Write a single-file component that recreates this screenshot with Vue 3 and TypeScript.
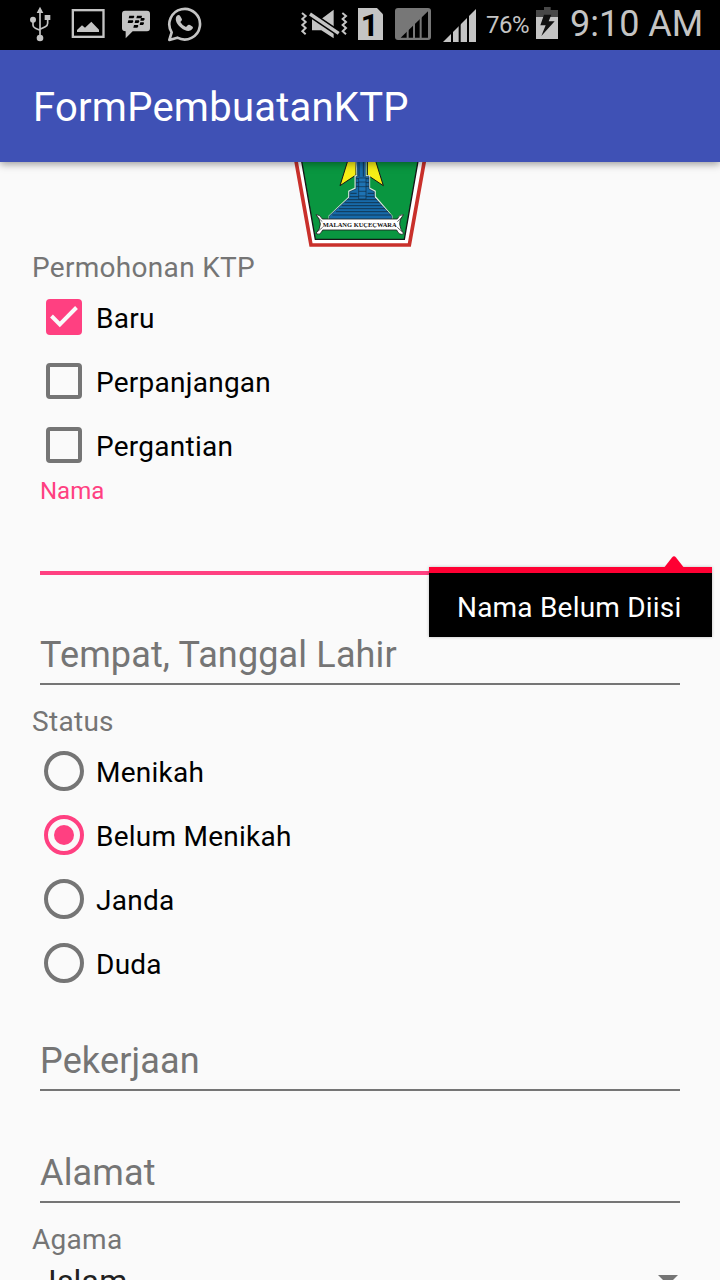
<script setup lang="ts">
import { ref } from 'vue'

const requests: string[] = ['Baru', 'Perpanjangan', 'Pergantian']
const statuses: string[] = ['Menikah', 'Belum Menikah', 'Janda', 'Duda']
const request = ref('Baru')
const status = ref('Belum Menikah')
</script>

<template>
  <div class="screen">
    <header class="statusbar">
      <svg class="usb" viewBox="87 0 66 150" width="22" height="50">
        <g fill="none" stroke="#c4c4c4" stroke-width="5">
          <path d="M120 34V108M99 62V76Q99 82 106 85L120 91M143 54V70Q143 77 136 80L120 88" />
        </g>
        <g fill="#c4c4c4">
          <path d="M120 20L130 39H110Z" />
          <circle cx="99" cy="59" r="9" />
          <rect x="134" y="45" width="17" height="15" />
          <circle cx="120" cy="114" r="10" />
        </g>
      </svg>
      <svg class="photo" viewBox="213 0 102 150" width="34" height="50">
        <rect x="218.500" y="30.500" width="92" height="80" fill="none" stroke="#c4c4c4" stroke-width="7" />
        <path d="M231 96V90L246 76L255 83L274 65L297 89V96Z" fill="#c4c4c4" />
      </svg>
      <svg class="bbm" viewBox="363 0 90 150" width="30" height="50">
        <path d="M375 32H441Q450 32 450 41V85Q450 94 441 94H398L377 115V94Q366 94 366 85V41Q366 32 375 32Z" fill="#c4c4c4" />
        <g fill="#000">
          <path d="M388 47H402Q405 51 400 55H386Z" />
          <path d="M411 47H425Q428 51 423 55H409Z" />
          <path d="M385 61H399Q402 65 397 69H383Z" />
          <path d="M406 61H417Q420 65 415 69H404Z" />
          <path d="M423 54H433Q436 58 431 62H421Z" />
          <path d="M421 67H431Q434 71 429 75H419Z" />
          <path d="M402 75H414Q417 79 412 83H400Z" />
        </g>
      </svg>
      <svg class="whatsapp" viewBox="498 0 108 150" width="36" height="50">
        <path d="M508 120L515 97A46 46 0 1 1 532 113Z" fill="none" stroke="#c4c4c4" stroke-width="8" stroke-linejoin="round" />
        <path d="M530 48Q537 42 541 49L546 58Q547 62 541 66Q547 77 558 81L564 75Q567 73 570 75L578 80Q581 83 576 88C568 97 554 92 544 84C533 75 522 60 530 48Z" fill="#c4c4c4" />
      </svg>

      <span class="push"></span>

      <svg class="silent" viewBox="30 0 144 150" width="48" height="50">
        <path d="M66 57H94L131 29V115L94 91H66Z" fill="#c4c4c4" />
        <path d="M60 42L146 100" fill="none" stroke="#000" stroke-width="19" />
        <path d="M60 42L146 100" fill="none" stroke="#c4c4c4" stroke-width="10" />
        <path d="M36 39L47 48L37 57L47 66L37 75L47 84L37 94L47 103M157 39L168 48L158 57L168 66L158 75L168 84L158 94L168 103" fill="none" stroke="#c4c4c4" stroke-width="6" />
      </svg>
      <svg class="sim" viewBox="204 0 75 150" width="25" height="50">
        <path d="M204 24H261L279 43V120H204Z" fill="#c4c4c4" />
        <text x="239" y="107" text-anchor="middle" class="sim-number">1</text>
      </svg>
      <svg class="roaming" viewBox="315 0 108 150" width="36" height="50">
        <rect x="315" y="24" width="108" height="96" rx="9" fill="#777" />
        <path d="M332 113L414 34V113Z" fill="#000" />
        <path d="M353 87V115M372 69V115M392 49V115" stroke="#777" stroke-width="6" />
      </svg>
      <svg class="signal" viewBox="459 0 99 150" width="33" height="50">
        <path d="M459 126L558 27V126Z" fill="#c4c4c4" />
        <path d="M486 80V128M509 60V128M534 35V128" stroke="#000" stroke-width="6" />
      </svg>
      <span class="percent">76%</span>
      <svg class="battery" viewBox="168 0 66 150" width="22" height="50">
        <path d="M168 30H192V21H212V30H234V51H168Z" fill="#484848" />
        <rect x="168" y="51" width="66" height="66" fill="#c4c4c4" />
        <path d="M192 44H214L206 64H224L184 108L197 76H181Z" fill="#111" />
      </svg>
      <time class="clock">9:10 AM</time>
    </header>

    <div class="appbar"><h1>FormPembuatanKTP</h1></div>

    <main class="form">
      <svg class="emblem" viewBox="30 36 420 258" width="140" height="86">
        <path d="M46 22L93 285H388L435 22Z" fill="#fff" stroke="#c9302b" stroke-width="11" />
        <path d="M63 22L106 268H373L416 22Z" fill="#099640" stroke="#151515" stroke-width="4" />
        <path d="M207 20L180 107L228 75V20ZM283 20L310 107L262 75V20Z" fill="#f6ee16" stroke="#151515" stroke-width="3" />
        <path d="M229 30H257V78H268V115L285 124V140L335 198V210H148V198L207 142V124L226 115V78H232Z" fill="#2171ad" stroke="#d8eadf" stroke-width="5" />
        <path d="M230 30H256V80H267V117L283 125V142L335 198V210H148V198L209 142V125L228 117V80H233Z" fill="#176aa9" stroke="#12344f" stroke-width="2" />
        <path d="M237 36V80M250 36V80M228 86H267M228 98H267M228 109H267M211 130H230M263 130H282M209 140H283M202 149H290M194 158H298M185 167H306M177 176H315M168 185H324M157 195H334" fill="none" stroke="#102c43" stroke-width="2.500" />
        <path d="M236 84H258V147H236Z" fill="#1e73b3" stroke="#102c43" stroke-width="2" />
        <path d="M236 96H258M236 110H258M236 124H258M236 138H258" stroke="#102c43" stroke-width="2" />
        <path d="M108 194Q120 193 127 207H352Q358 192 370 194Q357 211 359 223Q361 239 371 251Q358 258 350 240H128Q120 258 108 250Q121 237 121 222Q120 207 108 194Z" fill="#fff" stroke="#202020" stroke-width="2.500" />
        <path d="M113 202L127 215M112 245L128 232M366 202L352 215M366 245L352 232" stroke="#222" stroke-width="2" />
        <text x="239" y="230" text-anchor="middle" textLength="222" lengthAdjust="spacingAndGlyphs" class="motto">MALANG KUÇEÇWARA</text>
      </svg>

      <h2 class="label">Permohonan KTP</h2>
      <div class="choices">
        <label v-for="c in requests" :key="c" class="choice" @click="request = c">
          <svg width="40" height="40" viewBox="0 0 40 40">
            <template v-if="request === c">
              <rect x="2" y="2" width="36" height="36" rx="4" fill="#ff4081" />
              <path d="M7.500 19L15.800 27.300L32.500 10.500" fill="none" stroke="#fafafa" stroke-width="4" />
            </template>
            <rect v-else x="4" y="4" width="32" height="32" rx="2" fill="none" stroke="#757575" stroke-width="4" />
          </svg>
          <span>{{ c }}</span>
        </label>
      </div>

      <div class="field name-field">
        <span class="floating">Nama</span>
        <div class="error">
          <svg class="arrow" width="22" height="14" viewBox="0 0 22 14"><path d="M0 14L9 2.500Q11 0 13 2.500L22 14Z" fill="#ff0033" /></svg>
          <span>Nama Belum Diisi</span>
        </div>
      </div>
      <div class="field birth"><span>Tempat, Tanggal Lahir</span></div>

      <h2 class="label">Status</h2>
      <div class="choices">
        <label v-for="c in statuses" :key="c" class="choice" @click="status = c">
          <svg width="40" height="40" viewBox="0 0 40 40">
            <circle cx="20" cy="20" r="18" fill="none" :stroke="status === c ? '#ff4081' : '#757575'" stroke-width="4" />
            <circle v-if="status === c" cx="20" cy="20" r="10" fill="#ff4081" />
          </svg>
          <span>{{ c }}</span>
        </label>
      </div>

      <div class="field job"><span>Pekerjaan</span></div>
      <div class="field address"><span>Alamat</span></div>

      <h2 class="label">Agama</h2>
      <div class="spinner">
        <span>Islam</span>
        <svg width="20" height="10" viewBox="0 0 20 10"><path d="M0 0H20L10 10Z" fill="#757575" /></svg>
      </div>
    </main>
  </div>
</template>

<style>
body {
  margin: 0;
  background: #fafafa;
}
</style>

<style scoped>
.screen {
  width: 720px;
  height: 1280px;
  overflow: hidden;
  display: flex;
  flex-direction: column;
  background: #fafafa;
  color: #000;
  font-family: Roboto, "Liberation Sans", sans-serif;
}
svg {
  display: block;
  flex: none;
}
.statusbar {
  height: 50px;
  flex: none;
  display: flex;
  align-items: center;
  background: #000;
  color: #c4c4c4;
  padding: 0 17px 0 29px;
  white-space: nowrap;
}
.photo { margin-left: 20px; }
.bbm { margin-left: 16px; }
.whatsapp { margin-left: 15px; }
.push { flex: 1; }
.sim { margin-left: 10px; }
.sim-number { font-size: 94px; font-weight: 700; fill: #000; }
.roaming, .signal { margin-left: 12px; }
.percent {
  width: 50px;
  margin-left: 10px;
  font-size: 24px;
  line-height: 50px;
  letter-spacing: -0.5px;
}
.clock {
  width: 133px;
  margin-left: 12px;
  font-size: 36px;
  line-height: 48px;
  padding-bottom: 2px;
}
.appbar {
  height: 112px;
  flex: none;
  background: #3f51b5;
  box-shadow: 0 2px 8px rgba(0, 0, 0, 0.4);
  z-index: 1;
  display: flex;
  align-items: flex-start;
  padding: 0 33px;
}
h1, h2 {
  margin: 0;
  font-weight: 400;
}
h1 {
  color: #fff;
  font-size: 40px;
  line-height: 116px;
  letter-spacing: 0.25px;
}
.form {
  display: flex;
  flex-direction: column;
}
.emblem { align-self: center; }
.motto {
  font-family: "Liberation Serif", serif;
  font-size: 20px;
  font-weight: 700;
  fill: #111;
}
.label {
  height: 37px;
  padding-left: 32px;
  color: #757575;
  font-size: 28px;
  line-height: 40px;
  letter-spacing: 0.3px;
}
.choice {
  height: 64px;
  display: flex;
  align-items: center;
  gap: 12px;
  padding-left: 44px;
  font-size: 28px;
  letter-spacing: 0.25px;
}
.choice span { line-height: 38px; padding-top: 4px; }
.field {
  margin: 0 40px;
  color: #757575;
  font-size: 36px;
  line-height: 44px;
  letter-spacing: 0.15px;
  box-sizing: border-box;
  display: flex;
  align-items: flex-end;
  padding-bottom: 6px;
  border-bottom: 2px solid #757575;
}
.name-field {
  position: relative;
  height: 98px;
  align-items: flex-start;
  padding: 0;
  border-bottom: 4px solid #ff4081;
}
.floating {
  color: #ff4081;
  font-size: 24px;
  line-height: 28px;
  letter-spacing: 0;
}
.error {
  position: absolute;
  top: 90px;
  right: -32px;
  width: 283px;
  height: 70px;
  box-sizing: border-box;
  border-top: 6px solid #ff0033;
  background: #000;
  color: #fff;
  font-size: 28px;
  line-height: 70px;
  letter-spacing: 0.2px;
  padding-left: 28px;
  box-shadow: 0 0 3px rgba(0, 0, 0, 0.25);
  white-space: nowrap;
}
.arrow {
  position: absolute;
  top: -18px;
  right: 27px;
}
.birth { height: 110px; margin-bottom: 17px; }
.job { height: 96px; }
.address { height: 112px; margin-bottom: 17px; }
.spinner {
  display: flex;
  justify-content: space-between;
  padding: 0 42px 0 48px;
  color: #212121;
  font-size: 32px;
  line-height: 48px;
  letter-spacing: 0.2px;
}
.spinner svg { margin-top: 18px; }
</style>
